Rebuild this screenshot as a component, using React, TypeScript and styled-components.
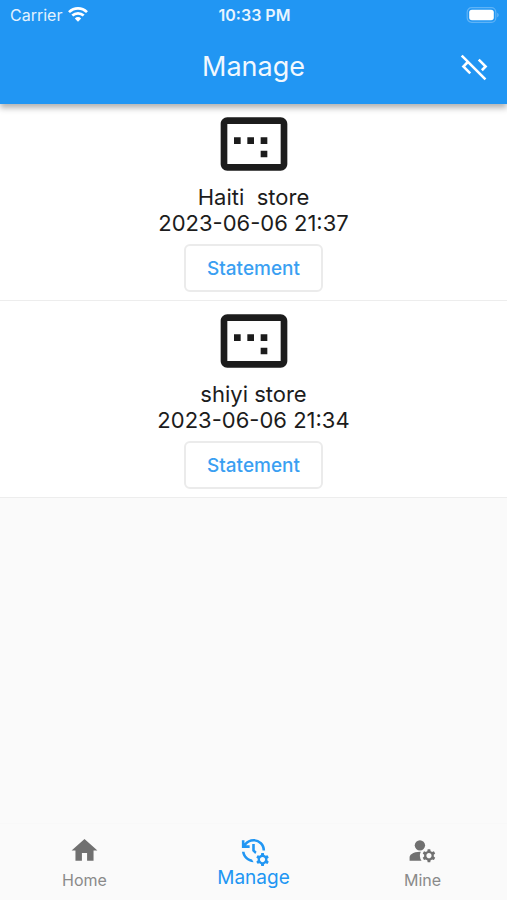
import React from "react";
import styled, { createGlobalStyle } from "styled-components";
import {
  MdCodeOff,
  MdHome,
  MdImageAspectRatio,
  MdManageAccounts,
  MdManageHistory,
} from "react-icons/md";

const GlobalStyle = createGlobalStyle`
  * { box-sizing: border-box; }
  body {
    margin: 0;
    background: #fafafa;
    color: #1c1c1c;
    font-family: Inter, "Liberation Sans", sans-serif;
  }
`;

const Screen = styled.div`
  display: flex;
  flex-direction: column;
  min-height: 100vh;
`;

const Header = styled.header`
  position: relative;
  background: #2196f3;
  color: #fff;
  box-shadow: 0 4px 6px rgba(0, 0, 0, 0.3);
`;

const StatusBar = styled.div`
  display: grid;
  grid-template-columns: 1fr auto 1fr;
  align-items: center;
  height: 29px;
  padding: 0 8px 0 10px;
  font-size: 16px;
  line-height: 20px;
`;

const Carrier = styled.span`
  display: flex;
  align-items: center;
  gap: 6px;
  color: #e3f2fe;
`;

const Clock = styled.time`
  font-weight: 600;
  color: #e8f4fe;
`;

const BatterySlot = styled.span`
  display: flex;
  justify-content: flex-end;
`;

const TitleBar = styled.div`
  display: grid;
  grid-template-columns: 1fr auto 1fr;
  align-items: center;
  height: 75px;
  padding: 0 17px;
`;

const Title = styled.h1`
  grid-column: 2;
  margin: 0;
  font-size: 27px;
  line-height: 32px;
  font-weight: 400;
  color: #f1f8fe;
`;

const IconButton = styled.button`
  display: flex;
  justify-self: end;
  padding: 0;
  border: 0;
  background: none;
  color: #fff;
  font-size: 31px;
  cursor: pointer;
`;

const StoreList = styled.ul`
  margin: 0;
  padding: 0;
  list-style: none;
`;

const StoreCard = styled.li`
  display: flex;
  flex-direction: column;
  align-items: center;
  padding: 0 16px 8px;
  background: #fff;
  border-bottom: 1px solid #ededed;
`;

const StoreIcon = styled(MdImageAspectRatio)`
  width: 80px;
  height: 80px;
`;

const StoreText = styled.p`
  margin: 0;
  font-size: 22px;
  line-height: 26px;
  white-space: pre;
`;

const StatementButton = styled.button`
  margin-top: 8px;
  height: 48px;
  padding: 0 21px;
  border: 2px solid #ebebeb;
  border-radius: 6px;
  background: #fff;
  color: #3a9ff2;
  font: inherit;
  font-size: 19px;
  font-weight: 500;
  cursor: pointer;
`;

const TabBar = styled.nav`
  display: grid;
  grid-template-columns: repeat(3, 1fr);
  height: 77px;
  margin-top: auto;
  border-top: 1px solid #f8f8f8;
`;

const Tab = styled.a<{ $active?: boolean }>`
  display: flex;
  flex-direction: column;
  align-items: center;
  gap: ${(p) => (p.$active ? 0 : 2)}px;
  padding-top: 11px;
  color: ${(p) => (p.$active ? "#2196f3" : "#8a8a8a")};
  font-size: ${(p) => (p.$active ? 19 : 16)}px;
  line-height: 24px;
  text-decoration: none;

  svg {
    width: 31px;
    height: 31px;
    color: ${(p) => (p.$active ? "#2196f3" : "#707070")};
  }
`;

const WifiIcon = () => (
  <svg width="20" height="15" viewBox="0 0 20 15" fill="none" stroke="#fff" strokeWidth="2.7" aria-hidden="true">
    <path d="M1 5.1C6.2.1 13.8.1 19 5.1" />
    <path d="M4.3 8.6c3.3-3.1 8.1-3.1 11.4 0" />
    <path d="M6.8 11.4c1.9-1.8 4.5-1.8 6.4 0L10 14.7z" fill="#fff" stroke="none" />
  </svg>
);

const BatteryIcon = () => (
  <svg width="33" height="16" viewBox="0 0 33 16" aria-hidden="true">
    <rect x="1.2" y=".7" width="28.6" height="14.6" rx="4.5" fill="none" stroke="#5fb3f6" strokeWidth="1.2" />
    <rect x="3.2" y="2.7" width="24.6" height="10.6" rx="2.8" fill="#fff" />
    <path d="M31.2 5.7c2 .8 2 3.8 0 4.6z" fill="#5fb3f6" />
  </svg>
);

const stores = [
  { name: "Haiti  store", date: "2023-06-06 21:37" },
  { name: "shiyi store", date: "2023-06-06 21:34" },
];

const tabs = [
  { label: "Home", Icon: MdHome },
  { label: "Manage", Icon: MdManageHistory, active: true },
  { label: "Mine", Icon: MdManageAccounts },
];

export default function App() {
  return (
    <Screen>
      <GlobalStyle />
      <Header>
        <StatusBar>
          <Carrier>
            Carrier <WifiIcon />
          </Carrier>
          <Clock>10:33 PM</Clock>
          <BatterySlot>
            <BatteryIcon />
          </BatterySlot>
        </StatusBar>
        <TitleBar>
          <Title>Manage</Title>
          <IconButton type="button" aria-label="Disconnect">
            <MdCodeOff />
          </IconButton>
        </TitleBar>
      </Header>
      <main>
        <StoreList>
          {stores.map((store) => (
            <StoreCard key={store.name}>
              <StoreIcon aria-hidden="true" />
              <StoreText>{store.name}</StoreText>
              <StoreText>{store.date}</StoreText>
              <StatementButton type="button">Statement</StatementButton>
            </StoreCard>
          ))}
        </StoreList>
      </main>
      <TabBar>
        {tabs.map(({ label, Icon, active }) => (
          <Tab key={label} href="#" $active={active} aria-current={active ? "page" : undefined}>
            <Icon aria-hidden="true" />
            {label}
          </Tab>
        ))}
      </TabBar>
    </Screen>
  );
}
